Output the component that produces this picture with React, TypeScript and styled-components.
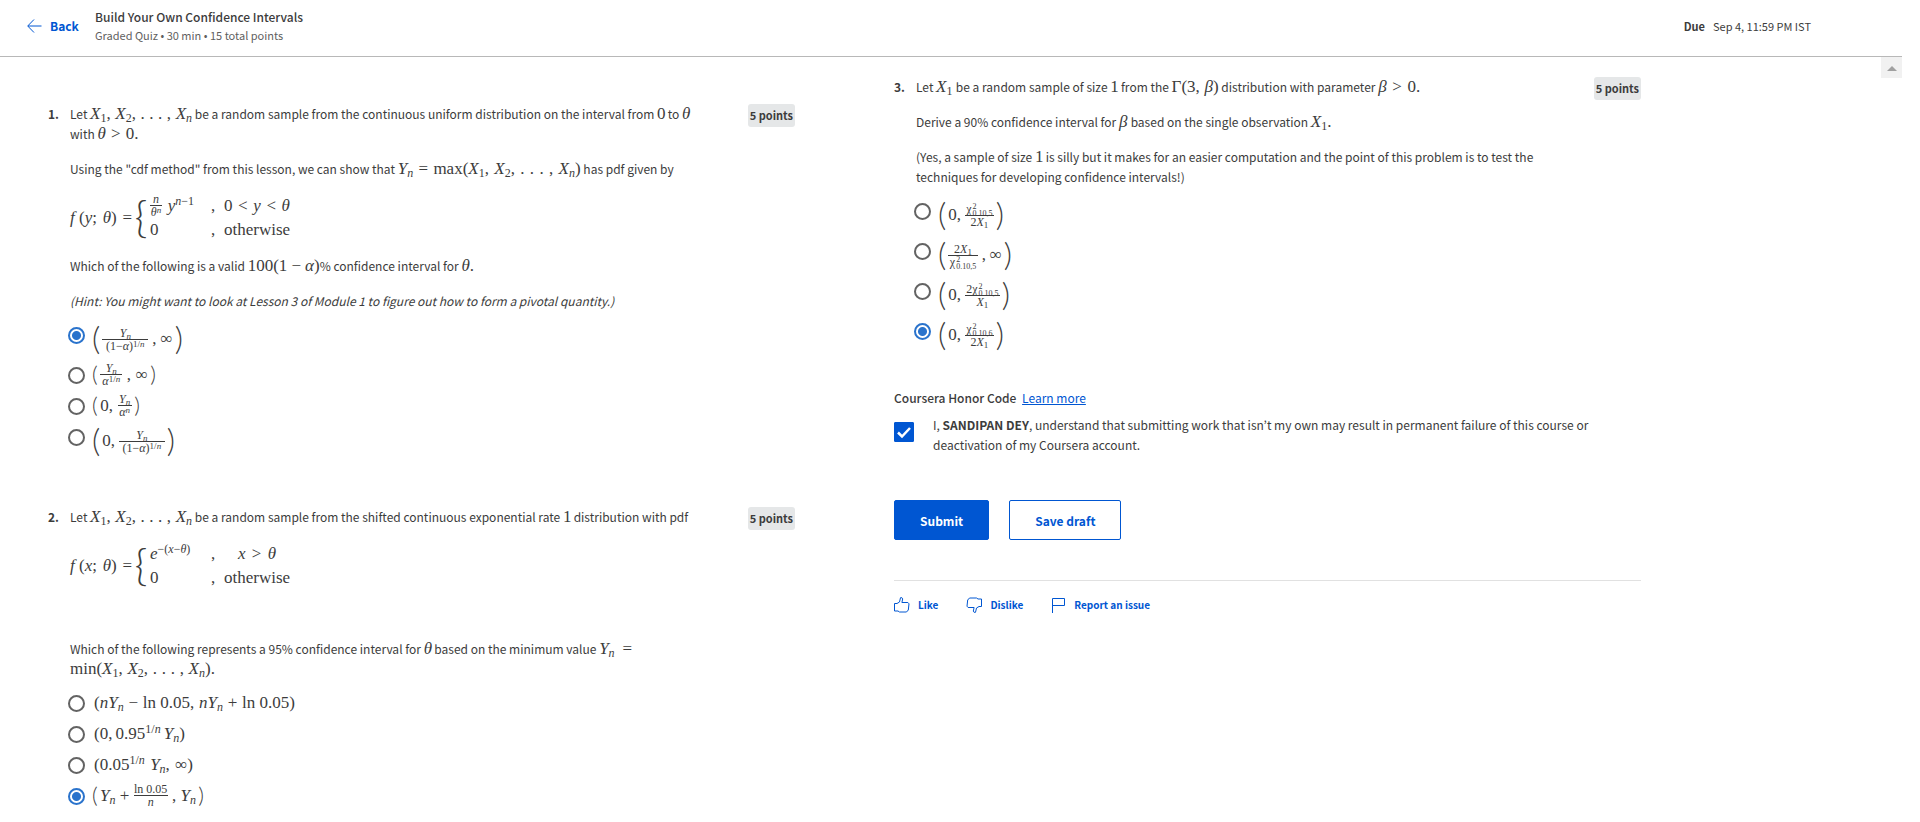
import React, { useState } from "react";
import styled, { createGlobalStyle } from "styled-components";

const BLUE = "#0056d2";
const SANS = `"Noto Sans CJK KR", "Open Sans", sans-serif`;
const SERIF = `"Liberation Serif", serif`;

const GlobalStyle = createGlobalStyle`
  * { box-sizing: border-box; }
  body {
    margin: 0;
    background: #fff;
    color: #3c3c3c;
    font-family: ${SANS};
    font-size: 12px;
    line-height: 20px;
  }
  button, input { font-family: inherit; margin: 0; }
  button { cursor: pointer; }
`;

const Page = styled.div`
  margin-right: 18px;
`;

const Header = styled.header`
  display: flex;
  align-items: center;
  height: 57px;
  padding: 0 91px 4px 27px;
  border-bottom: 1px solid #b8b8b8;
`;

const BackButton = styled.button`
  display: flex;
  align-items: center;
  gap: 8px;
  width: 68px;
  padding: 0;
  border: 0;
  background: none;
  color: ${BLUE};
  font-size: 12px;
  font-weight: 700;
  line-height: 20px;
`;

const Heading = styled.div`
  flex: 1;
`;

const Title = styled.h1`
  margin: 0;
  font-size: 12px;
  font-weight: 500;
  line-height: 18px;
`;

const Subtitle = styled.p`
  margin: 0;
  color: #5f5f5f;
  font-size: 11px;
  line-height: 18px;
`;

const Due = styled.p`
  display: flex;
  gap: 8px;
  margin: 0;
  font-size: 11px;
`;

const Body = styled.div`
  display: flex;
  align-items: flex-start;
`;

const Columns = styled.main`
  flex: 1;
  display: grid;
  grid-template-columns: 1fr 1fr;
  gap: 99px;
  padding: 0 240px 0 48px;
`;

const Column = styled.div<{ $top: number }>`
  padding-top: ${(p) => p.$top}px;
`;

const ScrollUp = styled.button`
  display: flex;
  align-items: center;
  justify-content: center;
  width: 21px;
  height: 21px;
  padding: 2px 0 0;
  border: 0;
  background: #f1f1f1;
`;

const QuestionRow = styled.section`
  display: flex;
  align-items: flex-start;
  margin-bottom: 46px;
  &:last-of-type { margin-bottom: 0; }
`;

const Number = styled.strong`
  width: 22px;
  flex: none;
`;

const QuestionBody = styled.div`
  flex: 1;
  padding-right: 48px;
`;

const Points = styled.span`
  flex: none;
  padding: 1px 2px 2px;
  border-radius: 3px;
  background: #e5e7e8;
  font-size: 11px;
  font-weight: 700;
`;

const Para = styled.p`
  margin: 0 0 15px;
  min-height: 20px;
`;

const Options = styled.fieldset`
  margin: -7px 0 0 -2px;
  padding: 0;
  border: 0;
`;

const Option = styled.label<{ $tall?: boolean }>`
  display: flex;
  align-items: center;
  gap: 9px;
  height: ${(p) => (p.$tall ? 40 : 31)}px;
`;

const Radio = styled.input`
  appearance: none;
  align-self: flex-start;
  width: 17px;
  height: 17px;
  margin-top: 8px;
  border: 2px solid #636363;
  border-radius: 50%;
  &:checked {
    border-color: #2a73cc;
    background: radial-gradient(circle, #2a73cc 4px, #fff 5px);
  }
`;

/* Inline formula: its atoms are spread over the width that it is set in. */
const Math = styled.span<{ $w: number; $center?: boolean }>`
  display: inline-flex;
  justify-content: space-between;
  align-items: ${(p) => (p.$center ? "center" : "baseline")};
  width: ${(p) => p.$w}px;
  font-family: ${SERIF};
  font-size: 17px;
  line-height: 16px;
  white-space: nowrap;
`;

const Sub = styled.sub`
  font-size: 12px;
  line-height: 0;
  vertical-align: -3px;
`;

const Sup = styled.sup`
  font-size: 12px;
  line-height: 0;
  vertical-align: 6px;
`;

const Delim = styled.span<{ $size: number }>`
  margin: 0 -2px;
  font-family: Lato, sans-serif;
  font-weight: 300;
  font-size: ${(p) => p.$size}px;
  line-height: 20px;
  padding-bottom: 2px;
`;

const FracBox = styled.span<{ $w: number }>`
  display: inline-flex;
  flex-direction: column;
  width: ${(p) => p.$w}px;
  font-size: 12px;
  line-height: 12px;
  text-align: center;
  ${Sub} { font-size: 9px; vertical-align: -2px; }
  ${Sup} { font-size: 9px; vertical-align: 3px; }
`;

const Denominator = styled.span`
  border-top: 1px solid #3c3c3c;
`;

const Scripts = styled.span`
  display: inline-flex;
  flex-direction: column;
  margin: -2px 0 -3px 1px;
  font-size: 8px;
  line-height: 7px;
  text-align: left;
  vertical-align: 4px;
`;

const Cases = styled.div`
  display: flex;
  align-items: center;
  height: 47px;
  margin-bottom: 15px;
  font-family: ${SERIF};
  font-size: 17px;
`;

const Brace = styled.span`
  width: 18px;
  font-family: Lato, sans-serif;
  font-size: 44px;
  line-height: 40px;
  font-weight: 300;
  padding-bottom: 4px;
  display: flex;
  justify-content: center;
`;

const CaseGrid = styled.div`
  display: grid;
  grid-template-columns: 61px 12px 68px;
  grid-auto-rows: 24px;
  line-height: 24px;
`;

const CaseCondition = styled.span`
  text-align: center;
`;

const HonorTitle = styled.div`
  margin: 33px 0 7px;
  font-weight: 500;
`;

const LearnMore = styled.a`
  margin-left: 3px;
  color: ${BLUE};
  font-weight: 400;
`;

const Agreement = styled.label`
  display: flex;
  align-items: flex-start;
  gap: 19px;
  margin-bottom: 45px;
`;

const CheckWrap = styled.span`
  display: grid;
  flex: none;
  margin-top: 7px;
  > * { grid-area: 1 / 1; }
`;

const Checkbox = styled.input`
  appearance: none;
  width: 20px;
  height: 20px;
  border: 1px solid ${BLUE};
  border-radius: 1px;
  &:checked { background: ${BLUE}; }
`;

const Actions = styled.div`
  display: flex;
  gap: 20px;
  padding-bottom: 40px;
  border-bottom: 1px solid #e1e1e1;
`;

const ActionButton = styled.button<{ $primary?: boolean }>`
  height: 40px;
  padding: 0 25px;
  border: 1px solid ${BLUE};
  border-radius: 2px;
  background: ${(p) => (p.$primary ? BLUE : "#fff")};
  color: ${(p) => (p.$primary ? "#fff" : BLUE)};
  font-size: 12px;
  font-weight: 700;
`;

const Feedback = styled.div`
  display: flex;
  gap: 28px;
  padding-top: 14px;
`;

const FeedbackButton = styled.button`
  display: flex;
  align-items: center;
  gap: 8px;
  padding: 0;
  border: 0;
  background: none;
  color: ${BLUE};
  font-size: 10px;
  font-weight: 700;
  line-height: 20px;
`;

const ThumbPath = () => (
  <path
    d="M.5 6.500H3L5.500 5 6.500.7h1.400l.8 1.200-.8 3.600h6l1.100 1.300-.7 6.200-1.800 2H5.500L4 14H.5z"
    fill="none"
    stroke={BLUE}
  />
);

const X = ({ n }: { n: React.ReactNode }) => (
  <>
    <i>X</i>
    <Sub>{n}</Sub>
  </>
);

const Yn = () => (
  <>
    <i>Y</i>
    <Sub>
      <i>n</i>
    </Sub>
  </>
);

const SampleAtoms = ({ open = "", close = "" }: { open?: string; close?: string }) => (
  <>
    <span>{open}<X n="1" />,</span>
    <span><X n="2" />,</span>
    <span>.</span>
    <span>.</span>
    <span>.</span>
    <span>,</span>
    <span><X n={<i>n</i>} />{close}</span>
  </>
);

const Frac = ({ w, top, bottom }: { w: number; top: React.ReactNode; bottom: React.ReactNode }) => (
  <FracBox $w={w}>
    <span>{top}</span>
    <Denominator>{bottom}</Denominator>
  </FracBox>
);

const Interval = ({ w, size, children }: { w: number; size: number; children: React.ReactNode }) => (
  <Math $w={w} $center>
    <Delim $size={size}>(</Delim>
    {children}
    <Delim $size={size}>)</Delim>
  </Math>
);

const OneOverN = () => (
  <Sup>
    1/<i>n</i>
  </Sup>
);

const ChiSquare = ({ df }: { df: number }) => (
  <>
    χ
    <Scripts>
      <span>2</span>
      <span>0.10,{df}</span>
    </Scripts>
  </>
);

type Choice = { tall?: boolean; formula: React.ReactNode };

const Choices = ({ name, initial, items }: { name: string; initial: number; items: Choice[] }) => {
  const [picked, setPicked] = useState(initial);
  return (
    <Options>
      {items.map((item, i) => (
        <Option key={i} $tall={item.tall}>
          <Radio type="radio" name={name} checked={picked === i} onChange={() => setPicked(i)} />
          {item.formula}
        </Option>
      ))}
    </Options>
  );
};

const Question = ({ number, children }: { number: number; children: React.ReactNode }) => (
  <QuestionRow>
    <Number>{number}.</Number>
    <QuestionBody>{children}</QuestionBody>
    <Points>5 points</Points>
  </QuestionRow>
);

const first: Choice[] = [
  {
    tall: true,
    formula: (
      <Interval w={87} size={32}>
        <Frac w={46} top={<Yn />} bottom={<>(1−<i>α</i>)<OneOverN /></>} />
        <span>,</span>
        <span>∞</span>
      </Interval>
    ),
  },
  {
    formula: (
      <Interval w={60} size={22}>
        <Frac w={22} top={<Yn />} bottom={<><i>α</i><OneOverN /></>} />
        <span>,</span>
        <span>∞</span>
      </Interval>
    ),
  },
  {
    formula: (
      <Interval w={44} size={22}>
        <span>0,</span>
        <Frac w={14} top={<Yn />} bottom={<><i>α</i><Sup><i>n</i></Sup></>} />
      </Interval>
    ),
  },
  {
    tall: true,
    formula: (
      <Interval w={79} size={32}>
        <span>0,</span>
        <Frac w={46} top={<Yn />} bottom={<>(1−<i>α</i>)<OneOverN /></>} />
      </Interval>
    ),
  },
];

const second: Choice[] = [
  {
    formula: (
      <Math $w={201}>
        <span>(<i>n</i><Yn /></span>
        <span>−</span>
        <span>ln 0.05,</span>
        <span><i>n</i><Yn /></span>
        <span>+</span>
        <span>ln 0.05)</span>
      </Math>
    ),
  },
  {
    formula: (
      <Math $w={91}>
        <span>(0,</span>
        <span>0.95<OneOverN /></span>
        <span><Yn />)</span>
      </Math>
    ),
  },
  {
    formula: (
      <Math $w={99}>
        <span>(0.05<OneOverN /></span>
        <span><Yn />,</span>
        <span>∞)</span>
      </Math>
    ),
  },
  {
    formula: (
      <Interval w={108} size={22}>
        <span><Yn /></span>
        <span>+</span>
        <Frac w={34} top="ln 0.05" bottom={<i>n</i>} />
        <span>,</span>
        <span><Yn /></span>
      </Interval>
    ),
  },
];

const third: Choice[] = [
  {
    tall: true,
    formula: (
      <Interval w={62} size={32}>
        <span>0,</span>
        <Frac w={29} top={<ChiSquare df={5} />} bottom={<>2<X n="1" /></>} />
      </Interval>
    ),
  },
  {
    tall: true,
    formula: (
      <Interval w={70} size={32}>
        <Frac w={30} top={<>2<X n="1" /></>} bottom={<ChiSquare df={5} />} />
        <span>,</span>
        <span>∞</span>
      </Interval>
    ),
  },
  {
    tall: true,
    formula: (
      <Interval w={68} size={32}>
        <span>0,</span>
        <Frac w={35} top={<>2<ChiSquare df={5} /></>} bottom={<X n="1" />} />
      </Interval>
    ),
  },
  {
    tall: true,
    formula: (
      <Interval w={62} size={32}>
        <span>0,</span>
        <Frac w={29} top={<ChiSquare df={6} />} bottom={<>2<X n="1" /></>} />
      </Interval>
    ),
  },
];

export default function App() {
  const [agreed, setAgreed] = useState(true);
  return (
    <Page>
      <GlobalStyle />
      <Header>
        <BackButton type="button">
          <svg width="15" height="14" viewBox="0 0 15 14" fill="none" stroke={BLUE} aria-hidden="true">
            <path d="M14.500 7H1M7 .5.700 7 7 13.500" />
          </svg>
          Back
        </BackButton>
        <Heading>
          <Title>Build Your Own Confidence Intervals</Title>
          <Subtitle>Graded Quiz • 30 min • 15 total points</Subtitle>
        </Heading>
        <Due>
          <strong>Due</strong>
          <span>Sep 4, 11:59 PM IST</span>
        </Due>
      </Header>
      <Body>
        <Columns>
          <Column $top={47}>
            <Question number={1}>
              <Para>
                Let <Math $w={102}><SampleAtoms /></Math> be a random sample from the continuous uniform
                distribution on the interval from <Math $w={8}>0</Math> to <Math $w={8}><i>θ</i></Math>{" "}
                with <Math $w={41}><i>θ</i><span>&gt;</span><span>0.</span></Math>
              </Para>
              <Para>
                Using the "cdf method" from this lesson, we can show that{" "}
                <Math $w={183}>
                  <span><Yn /></span>
                  <span>=</span>
                  <span>max(<X n="1" />,</span>
                  <span><X n="2" />,</span>
                  <span>.</span>
                  <span>.</span>
                  <span>.</span>
                  <span>,</span>
                  <span><X n={<i>n</i>} />)</span>
                </Math>{" "}
                has pdf given by
              </Para>
              <Cases>
                <Math $w={62}><span><i>f</i> (<i>y</i>;</span><span><i>θ</i>)</span><span>=</span></Math>
                <Brace>{"{"}</Brace>
                <CaseGrid>
                  <Math $w={44} $center>
                    <Frac w={12} top={<i>n</i>} bottom={<><i>θ</i><Sup><i>n</i></Sup></>} />
                    <span><i>y</i><Sup><i>n</i>−1</Sup></span>
                  </Math>
                  <span>,</span>
                  <CaseCondition>
                    <Math $w={66}><span>0</span><span>&lt;</span><i>y</i><span>&lt;</span><i>θ</i></Math>
                  </CaseCondition>
                  <span>0</span>
                  <span>,</span>
                  <CaseCondition>otherwise</CaseCondition>
                </CaseGrid>
              </Cases>
              <Para>
                Which of the following is a valid{" "}
                <Math $w={72}><span>100(1</span><span>−</span><span><i>α</i>)</span></Math>% confidence
                interval for <Math $w={12}><span><i>θ</i>.</span></Math>
              </Para>
              <Para>
                <i>
                  (Hint: You might want to look at Lesson 3 of Module 1 to figure out how to form a pivotal
                  quantity.)
                </i>
              </Para>
              <Choices name="q1" initial={0} items={first} />
            </Question>
            <Question number={2}>
              <Para>
                Let <Math $w={102}><SampleAtoms /></Math> be a random sample from the shifted continuous
                exponential rate <Math $w={8}>1</Math> distribution with pdf
              </Para>
              <Cases>
                <Math $w={62}><span><i>f</i> (<i>x</i>;</span><span><i>θ</i>)</span><span>=</span></Math>
                <Brace>{"{"}</Brace>
                <CaseGrid>
                  <span><i>e</i><Sup>−(<i>x</i>−<i>θ</i>)</Sup></span>
                  <span>,</span>
                  <CaseCondition>
                    <Math $w={38}><i>x</i><span>&gt;</span><i>θ</i></Math>
                  </CaseCondition>
                  <span>0</span>
                  <span>,</span>
                  <CaseCondition>otherwise</CaseCondition>
                </CaseGrid>
              </Cases>
              <Para />
              <Para>
                Which of the following represents a 95% confidence interval for{" "}
                <Math $w={8}><i>θ</i></Math> based on the minimum value{" "}
                <Math $w={33}><span><Yn /></span><span>=</span></Math>{" "}
                <Math $w={145}><SampleAtoms open="min(" close=")." /></Math>
              </Para>
              <Choices name="q2" initial={3} items={second} />
            </Question>
          </Column>
          <Column $top={20}>
            <Question number={3}>
              <Para>
                Let <Math $w={17}><span><X n="1" /></span></Math> be a random sample of size{" "}
                <Math $w={8}>1</Math> from the{" "}
                <Math $w={47}><span>Γ(3,</span><span><i>β</i>)</span></Math> distribution with parameter{" "}
                <Math $w={42}><i>β</i><span>&gt;</span><span>0.</span></Math>
              </Para>
              <Para>
                Derive a 90% confidence interval for <Math $w={9}><i>β</i></Math> based on the single
                observation <Math $w={22}><span><X n="1" />.</span></Math>
              </Para>
              <Para>
                (Yes, a sample of size <Math $w={8}>1</Math> is silly but it makes for an easier computation
                and the point of this problem is to test the techniques for developing confidence intervals!)
              </Para>
              <Choices name="q3" initial={3} items={third} />
            </Question>
            <HonorTitle>
              Coursera Honor Code <LearnMore href="#honor-code">Learn more</LearnMore>
            </HonorTitle>
            <Agreement>
              <CheckWrap>
                <Checkbox type="checkbox" checked={agreed} onChange={() => setAgreed(!agreed)} />
                <svg width="20" height="20" viewBox="0 0 20 20" pointerEvents="none" aria-hidden="true">
                  <path d="M4 10.500 8 14.500 16 6" fill="none" stroke="#fff" strokeWidth="2.500" />
                </svg>
              </CheckWrap>
              <span>
                I, <strong>SANDIPAN DEY</strong>, understand that submitting work that isn’t my own may
                result in permanent failure of this course or deactivation of my Coursera account.
              </span>
            </Agreement>
            <Actions>
              <ActionButton type="button" $primary>Submit</ActionButton>
              <ActionButton type="button">Save draft</ActionButton>
            </Actions>
            <Feedback>
              <FeedbackButton type="button">
                <svg width="16" height="16" viewBox="0 0 16 16" aria-hidden="true">
                  <ThumbPath />
                </svg>
                Like
              </FeedbackButton>
              <FeedbackButton type="button">
                <svg width="16" height="16" viewBox="0 0 16 16" aria-hidden="true">
                  <g transform="rotate(180 8 8)">
                    <ThumbPath />
                  </g>
                </svg>
                Dislike
              </FeedbackButton>
              <FeedbackButton type="button">
                <svg width="15" height="16" viewBox="0 0 15 16" fill="none" stroke={BLUE} aria-hidden="true">
                  <path d="M1.500 16V1.500h12v7h-12" />
                </svg>
                Report an issue
              </FeedbackButton>
            </Feedback>
          </Column>
        </Columns>
        <ScrollUp type="button" aria-label="Scroll up">
          <svg width="10" height="5" viewBox="0 0 10 5" aria-hidden="true">
            <path d="M0 5 5 0l5 5z" fill="#a0a0a0" />
          </svg>
        </ScrollUp>
      </Body>
    </Page>
  );
}
